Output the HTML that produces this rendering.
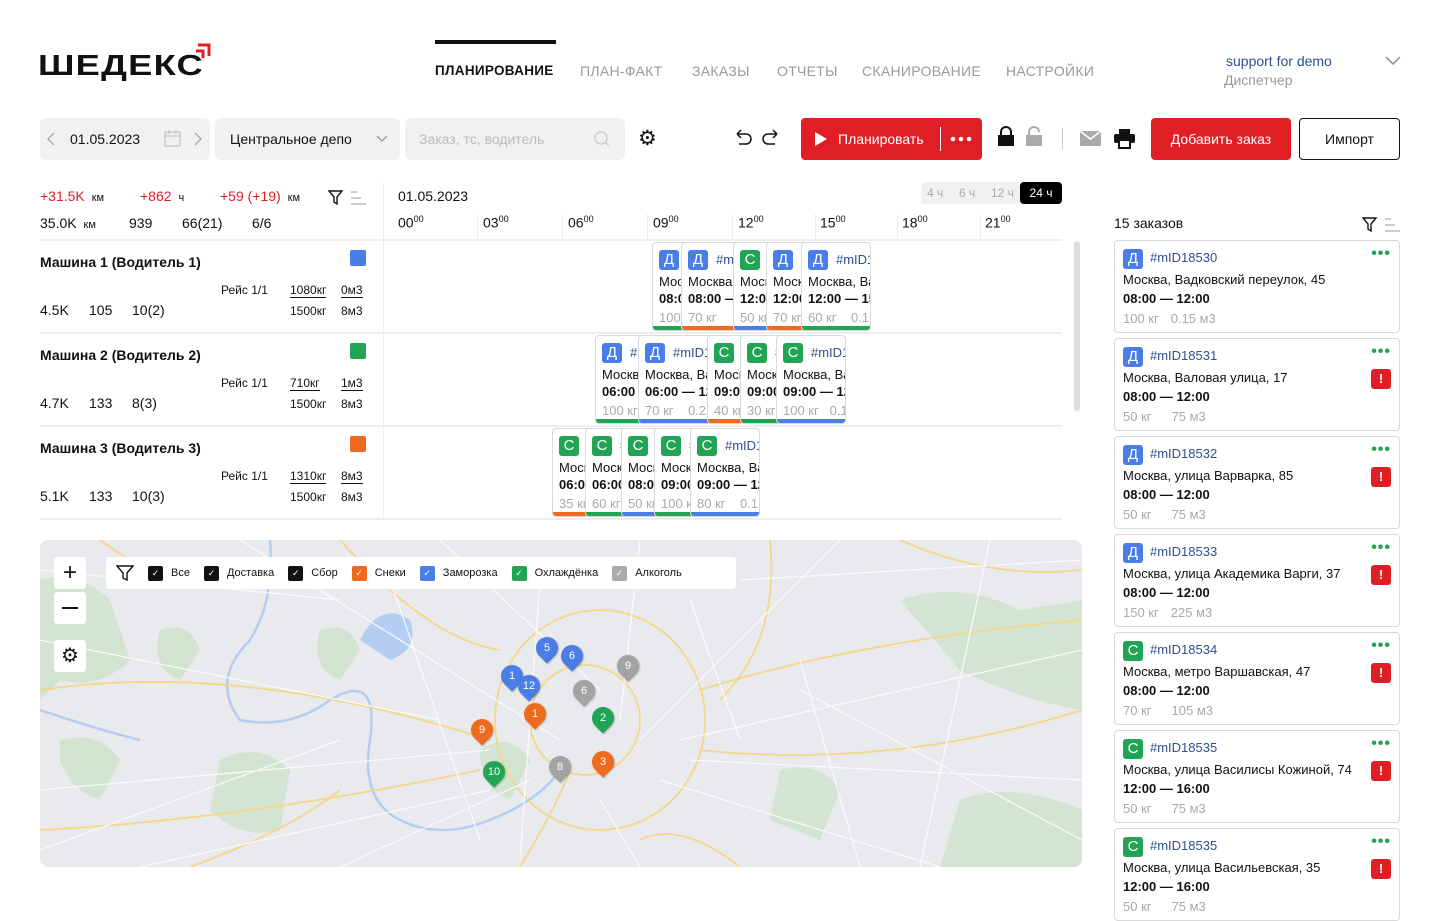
<!DOCTYPE html>
<html><head><meta charset="utf-8"><style>
*{box-sizing:border-box;margin:0;padding:0}
body{width:1440px;height:886px;overflow:hidden;background:#fff;font-family:"Liberation Sans",sans-serif;color:#111;position:relative}
.a{position:absolute}
.nav{font-size:14px;color:#9a9a9a;letter-spacing:.3px;top:63px}
.box{background:#f1f1f1;border-radius:6px;height:42px;top:118px}
.red{color:#e01e26}
.b{font-weight:bold}
.g{color:#999}
.card{position:absolute;background:#fff;border:1px solid #d9d9d9;border-radius:4px;overflow:hidden;font-size:13px;white-space:nowrap}
.card .bg{position:absolute;left:6px;top:7px;width:20px;height:20px;border-radius:3px;color:#fff;font-size:15px;text-align:center;line-height:20px}
.card .id{position:absolute;left:34px;top:9px;color:#2f4f8f}
.card .l1{position:absolute;left:6px;top:31px}
.card .l2{position:absolute;left:6px;top:48px;font-weight:bold}
.card .l3{position:absolute;left:6px;top:67px;color:#aaa}
.card .bar{position:absolute;left:0;right:0;bottom:0;height:4px}
.D{background:#4a7ee6}.C{background:#22a455}.O{background:#ee6a1f}
.rc{position:absolute;left:1114px;width:286px;height:93px;border:1px solid #d9d9d9;border-radius:4px;font-size:13px}
.rc .bg{position:absolute;left:8px;top:8px;width:20px;height:20px;border-radius:3px;color:#fff;font-size:15px;text-align:center;line-height:20px}
.rc .id{position:absolute;left:35px;top:9px;color:#2f4f8f}
.rc .l1{position:absolute;left:8px;top:31px}
.rc .l2{position:absolute;left:8px;top:50px;font-weight:bold}
.rc .l3{position:absolute;left:8px;top:70px;color:#aaa}
.rc .l3 i{font-style:normal;margin-left:12px}
.rc .dots{position:absolute;right:8px;top:4px;color:#22a455;font-size:16px;letter-spacing:1px;font-weight:bold}
.rc .ex{position:absolute;right:8px;top:30px;width:20px;height:20px;background:#e01e26;border-radius:3px;color:#fff;font-weight:bold;text-align:center;line-height:20px;font-size:13px}
.hr{font-size:14px;top:214px}
.hr sup{font-size:9px}
.vl{position:absolute;width:1px;background:#eee}
.pin{position:absolute;width:22px;height:22px;border-radius:50% 50% 50% 0;transform:rotate(-45deg);box-shadow:0 1px 2px rgba(0,0,0,.3)}
.pin span{display:block;transform:rotate(45deg);color:#fff;font-size:11px;text-align:center;line-height:22px}
.cb{display:inline-block;width:15px;height:15px;border-radius:2px;vertical-align:middle;margin-right:8px;color:#fff;font-size:9px;text-align:center;line-height:15px}
.lg{font-size:11px;margin-right:14px;vertical-align:middle}
</style></head><body>

<div class="a" style="left:38px;top:50px;font-size:29px;font-weight:900;letter-spacing:1px;transform:scaleX(1.25);transform-origin:left">ШЕДЕКС</div>
<svg class="a" style="left:194px;top:42px" width="18" height="18"><path d="M4 3h11v11M2 9h7v7" fill="none" stroke="#e01e26" stroke-width="3"/></svg>

<div class="a" style="left:435px;top:40px;width:121px;height:4px;background:#111"></div>
<div class="a nav" style="left:435px;color:#111;font-weight:bold;font-size:13.5px">ПЛАНИРОВАНИЕ</div>
<div class="a nav" style="left:580px">ПЛАН-ФАКТ</div>
<div class="a nav" style="left:692px">ЗАКАЗЫ</div>
<div class="a nav" style="left:777px">ОТЧЕТЫ</div>
<div class="a nav" style="left:862px">СКАНИРОВАНИЕ</div>
<div class="a nav" style="left:1006px">НАСТРОЙКИ</div>
<div class="a" style="left:1226px;top:53px;font-size:14px;color:#2f4f8f">support for demo</div>
<div class="a" style="left:1224px;top:72px;font-size:14px;color:#999">Диспетчер</div>
<svg class="a" style="left:1385px;top:56px" width="16" height="10"><path d="M1 1l7 7 7-7" fill="none" stroke="#888" stroke-width="1.5"/></svg>

<div class="a box" style="left:40px;width:170px"></div>
<svg class="a" style="left:47px;top:132px" width="8" height="14"><path d="M7 1L1 7l6 6" fill="none" stroke="#aaa" stroke-width="1.4"/></svg>
<div class="a" style="left:70px;top:131px;font-size:14px">01.05.2023</div>
<svg class="a" style="left:164px;top:130px" width="18" height="17"><rect x="1" y="2" width="15" height="14" fill="none" stroke="#bbb"/><path d="M1 6h15M5 0v4M12 0v4" stroke="#bbb"/></svg>
<svg class="a" style="left:194px;top:132px" width="8" height="14"><path d="M1 1l6 6-6 6" fill="none" stroke="#aaa" stroke-width="1.4"/></svg>
<div class="a box" style="left:215px;width:185px"></div>
<div class="a" style="left:230px;top:131px;font-size:14px">Центральное депо</div>
<svg class="a" style="left:376px;top:135px" width="12" height="8"><path d="M1 1l5 5 5-5" fill="none" stroke="#999" stroke-width="1.3"/></svg>
<div class="a box" style="left:405px;width:220px"></div>
<div class="a" style="left:419px;top:131px;font-size:14px;color:#bbb">Заказ, тс, водитель</div>
<svg class="a" style="left:593px;top:130px" width="18" height="18"><circle cx="8" cy="8" r="6" fill="none" stroke="#ccc" stroke-width="1.3"/><path d="M12.5 12.5l4 4" stroke="#ccc" stroke-width="1.3"/></svg>
<div class="a" style="left:638px;top:126px;font-size:21px">⚙</div>
<svg class="a" style="left:733px;top:129px" width="48" height="18"><path d="M4 5h9a5 5 0 010 10H6M4 5l4-4M4 5l4 4M44 5h-9a5 5 0 000 10h7M44 5l-4-4M44 5l-4 4" fill="none" stroke="#111" stroke-width="1.5"/></svg>
<div class="a" style="left:801px;top:118px;width:181px;height:42px;background:#e01e26;border-radius:4px"></div>
<svg class="a" style="left:814px;top:131px" width="14" height="16"><path d="M1 1l12 7-12 7z" fill="#fff"/></svg>
<div class="a" style="left:838px;top:131px;font-size:14px;color:#fff">Планировать</div>
<div class="a" style="left:940px;top:127px;width:1px;height:24px;background:#fff"></div>
<svg class="a" style="left:950px;top:136px" width="22" height="6"><circle cx="3" cy="3" r="2.3" fill="#fff"/><circle cx="11" cy="3" r="2.3" fill="#fff"/><circle cx="19" cy="3" r="2.3" fill="#fff"/></svg>
<svg class="a" style="left:997px;top:126px" width="46" height="22"><path d="M4 9V6a5 5 0 0110 0v3" fill="none" stroke="#111" stroke-width="2"/><rect x="1" y="9" width="16" height="11" fill="#111"/><path d="M32 9V6a5 5 0 0110 0" fill="none" stroke="#aaa" stroke-width="2"/><rect x="29" y="9" width="16" height="11" fill="#aaa"/></svg>
<div class="a" style="left:1062px;top:128px;width:1px;height:22px;background:#ccc"></div>
<svg class="a" style="left:1080px;top:131px" width="21" height="15"><rect width="21" height="15" fill="#aaa"/><path d="M0 0l10.5 8L21 0" fill="none" stroke="#fff" stroke-width="1.5"/></svg>
<svg class="a" style="left:1114px;top:129px" width="21" height="20"><rect x="5" y="0" width="11" height="5" fill="#111"/><rect x="0" y="5" width="21" height="9" rx="2" fill="#111"/><rect x="5" y="11" width="11" height="8" fill="#fff" stroke="#111" stroke-width="2"/></svg>
<div class="a" style="left:1151px;top:118px;width:140px;height:42px;background:#e01e26;border-radius:4px;color:#fff;font-size:14px;text-align:center;line-height:42px">Добавить заказ</div>
<div class="a" style="left:1299px;top:118px;width:101px;height:42px;border:1.5px solid #111;border-radius:4px;font-size:14px;text-align:center;line-height:40px">Импорт</div>

<div class="a red" style="left:40px;top:188px;font-size:14px">+31.5K <span style="color:#111;font-size:11px">&nbsp;км</span></div>
<div class="a red" style="left:140px;top:188px;font-size:14px">+862 <span style="color:#111;font-size:11px">&nbsp;ч</span></div>
<div class="a red" style="left:220px;top:188px;font-size:14px">+59 (+19) <span style="color:#111;font-size:11px">&nbsp;км</span></div>
<svg class="a" style="left:328px;top:190px" width="40" height="16"><path d="M1 1h13l-5 6v7l-3-2V7z" fill="none" stroke="#111" stroke-width="1.4"/><path d="M23 2h6M23 8h10M23 14h15" stroke="#bbb" stroke-width="1.4"/></svg>
<div class="a" style="left:40px;top:215px;font-size:14px">35.0K <span style="font-size:11px">&nbsp;км</span></div>
<div class="a" style="left:129px;top:215px;font-size:14px">939</div>
<div class="a" style="left:182px;top:215px;font-size:14px">66(21)</div>
<div class="a" style="left:252px;top:215px;font-size:14px">6/6</div>

<div class="a" style="left:383px;top:183px;width:1px;height:336px;background:#eee"></div>
<div class="a" style="left:398px;top:188px;font-size:14px">01.05.2023</div>
<div class="a" style="left:921px;top:182px;width:141px;height:22px;background:#f1f1f1;border-radius:4px"></div>
<div class="a" style="left:927px;top:186px;font-size:12px;color:#aaa">4 ч</div>
<div class="a" style="left:959px;top:186px;font-size:12px;color:#aaa">6 ч</div>
<div class="a" style="left:991px;top:186px;font-size:12px;color:#aaa">12 ч</div>
<div class="a" style="left:1020px;top:182px;width:42px;height:22px;background:#000;border-radius:4px;color:#fff;font-size:12px;text-align:center;line-height:22px">24 ч</div>
<div class="a hr" style="left:398px">00<sup>00</sup></div>
<div class="a hr" style="left:483px">03<sup>00</sup></div>
<div class="a hr" style="left:568px">06<sup>00</sup></div>
<div class="a hr" style="left:653px">09<sup>00</sup></div>
<div class="a hr" style="left:738px">12<sup>00</sup></div>
<div class="a hr" style="left:820px">15<sup>00</sup></div>
<div class="a hr" style="left:902px">18<sup>00</sup></div>
<div class="a hr" style="left:985px">21<sup>00</sup></div>
<div class="vl" style="left:477px;top:214px;height:26px"></div>
<div class="vl" style="left:562px;top:214px;height:26px"></div>
<div class="vl" style="left:647px;top:214px;height:26px"></div>
<div class="vl" style="left:732px;top:214px;height:26px"></div>
<div class="vl" style="left:815px;top:214px;height:26px"></div>
<div class="vl" style="left:897px;top:214px;height:26px"></div>
<div class="vl" style="left:980px;top:214px;height:26px"></div>
<div class="a" style="left:40px;top:239px;width:1022px;height:2px;background:#eee"></div>
<div class="a" style="left:40px;top:332px;width:1022px;height:2px;background:#eee"></div>
<div class="a" style="left:40px;top:425px;width:1022px;height:2px;background:#eee"></div>
<div class="a" style="left:40px;top:518px;width:1022px;height:2px;background:#eee"></div>
<div class="a" style="left:1074px;top:241px;width:6px;height:170px;background:#ddd;border-radius:3px"></div>

<div class="a b" style="left:40px;top:254px;font-size:14px">Машина 1 (Водитель 1)</div>
<div class="a D" style="left:350px;top:250px;width:16px;height:16px;border-radius:2px"></div>
<div class="a" style="left:221px;top:283px;font-size:12px">Рейс 1/1</div>
<div class="a" style="left:290px;top:283px;font-size:12px;border-bottom:1px solid #111">1080кг</div>
<div class="a" style="left:341px;top:283px;font-size:12px;border-bottom:1px solid #111">0м3</div>
<div class="a" style="left:290px;top:304px;font-size:12px">1500кг</div>
<div class="a" style="left:341px;top:304px;font-size:12px">8м3</div>
<div class="a" style="left:40px;top:302px;font-size:14px">4.5K</div><div class="a" style="left:89px;top:302px;font-size:14px">105</div><div class="a" style="left:132px;top:302px;font-size:14px">10(2)</div>

<div class="a b" style="left:40px;top:347px;font-size:14px">Машина 2 (Водитель 2)</div>
<div class="a C" style="left:350px;top:343px;width:16px;height:16px;border-radius:2px"></div>
<div class="a" style="left:221px;top:376px;font-size:12px">Рейс 1/1</div>
<div class="a" style="left:290px;top:376px;font-size:12px;border-bottom:1px solid #111">710кг</div>
<div class="a" style="left:341px;top:376px;font-size:12px;border-bottom:1px solid #111">1м3</div>
<div class="a" style="left:290px;top:397px;font-size:12px">1500кг</div>
<div class="a" style="left:341px;top:397px;font-size:12px">8м3</div>
<div class="a" style="left:40px;top:395px;font-size:14px">4.7K</div><div class="a" style="left:89px;top:395px;font-size:14px">133</div><div class="a" style="left:132px;top:395px;font-size:14px">8(3)</div>

<div class="a b" style="left:40px;top:440px;font-size:14px">Машина 3 (Водитель 3)</div>
<div class="a O" style="left:350px;top:436px;width:16px;height:16px;border-radius:2px"></div>
<div class="a" style="left:221px;top:469px;font-size:12px">Рейс 1/1</div>
<div class="a" style="left:290px;top:469px;font-size:12px;border-bottom:1px solid #111">1310кг</div>
<div class="a" style="left:341px;top:469px;font-size:12px;border-bottom:1px solid #111">8м3</div>
<div class="a" style="left:290px;top:490px;font-size:12px">1500кг</div>
<div class="a" style="left:341px;top:490px;font-size:12px">8м3</div>
<div class="a" style="left:40px;top:488px;font-size:14px">5.1K</div><div class="a" style="left:89px;top:488px;font-size:14px">133</div><div class="a" style="left:132px;top:488px;font-size:14px">10(3)</div>

<div class="card" style="left:652px;top:242px;width:40px;height:89px"><div class="bg D">Д</div><div class="id">#m</div><div class="l1">Москва</div><div class="l2">08:00</div><div class="l3">100 кг</div><div class="bar C"></div></div>
<div class="card" style="left:681px;top:242px;width:60px;height:89px"><div class="bg D">Д</div><div class="id">#mID1</div><div class="l1">Москва</div><div class="l2">08:00 —</div><div class="l3">70 кг</div><div class="bar O"></div></div>
<div class="card" style="left:733px;top:242px;width:40px;height:89px"><div class="bg C">С</div><div class="id">#m</div><div class="l1">Москва</div><div class="l2">12:00</div><div class="l3">50 кг</div><div class="bar D"></div></div>
<div class="card" style="left:766px;top:242px;width:40px;height:89px"><div class="bg D">Д</div><div class="id">#m</div><div class="l1">Москва</div><div class="l2">12:00</div><div class="l3">70 кг</div><div class="bar O"></div></div>
<div class="card" style="left:801px;top:242px;width:70px;height:89px"><div class="bg D">Д</div><div class="id">#mID1</div><div class="l1">Москва, Ва</div><div class="l2">12:00 — 15</div><div class="l3">60 кг &nbsp;&nbsp; 0.1</div><div class="bar C"></div></div>
<div class="card" style="left:595px;top:335px;width:50px;height:89px"><div class="bg D">Д</div><div class="id">#m</div><div class="l1">Москва</div><div class="l2">06:00</div><div class="l3">100 кг</div><div class="bar C"></div></div>
<div class="card" style="left:638px;top:335px;width:76px;height:89px"><div class="bg D">Д</div><div class="id">#mID1</div><div class="l1">Москва, Ва</div><div class="l2">06:00 — 12</div><div class="l3">70 кг &nbsp;&nbsp; 0.2</div><div class="bar D"></div></div>
<div class="card" style="left:707px;top:335px;width:40px;height:89px"><div class="bg C">С</div><div class="id">#m</div><div class="l1">Москва</div><div class="l2">09:00</div><div class="l3">40 кг</div><div class="bar O"></div></div>
<div class="card" style="left:740px;top:335px;width:42px;height:89px"><div class="bg C">С</div><div class="id">#m</div><div class="l1">Москва</div><div class="l2">09:00</div><div class="l3">30 кг</div><div class="bar C"></div></div>
<div class="card" style="left:776px;top:335px;width:70px;height:89px"><div class="bg C">С</div><div class="id">#mID1</div><div class="l1">Москва, Ва</div><div class="l2">09:00 — 12</div><div class="l3">100 кг &nbsp; 0.1</div><div class="bar D"></div></div>
<div class="card" style="left:552px;top:428px;width:40px;height:89px"><div class="bg C">С</div><div class="id">#m</div><div class="l1">Москва</div><div class="l2">06:00</div><div class="l3">35 кг</div><div class="bar O"></div></div>
<div class="card" style="left:585px;top:428px;width:42px;height:89px"><div class="bg C">С</div><div class="id">#m</div><div class="l1">Москва</div><div class="l2">06:00</div><div class="l3">60 кг</div><div class="bar C"></div></div>
<div class="card" style="left:621px;top:428px;width:40px;height:89px"><div class="bg C">С</div><div class="id">#m</div><div class="l1">Москва</div><div class="l2">08:00</div><div class="l3">50 кг</div><div class="bar D"></div></div>
<div class="card" style="left:654px;top:428px;width:42px;height:89px"><div class="bg C">С</div><div class="id">#m</div><div class="l1">Москва</div><div class="l2">09:00</div><div class="l3">100 кг</div><div class="bar C"></div></div>
<div class="card" style="left:690px;top:428px;width:70px;height:89px"><div class="bg C">С</div><div class="id">#mID1</div><div class="l1">Москва, Ва</div><div class="l2">09:00 — 12</div><div class="l3">80 кг &nbsp;&nbsp; 0.1</div><div class="bar D"></div></div>

<div class="a" style="left:40px;top:540px;width:1042px;height:327px;background:#e9eaed;border-radius:8px;overflow:hidden">
<svg width="1042" height="327" style="position:absolute;left:0;top:0">
<g fill="#cfe3cc" opacity=".85">
<path d="M0 40 Q40 30 70 60 L90 120 Q60 150 20 140 L0 160Z"/>
<path d="M20 200 Q60 190 80 220 L60 260 Q30 250 20 220Z"/>
<path d="M180 220 Q220 200 250 230 L240 290 Q200 300 170 270Z"/>
<path d="M280 90 Q310 80 320 110 L300 140 Q270 130 280 90Z"/>
<path d="M440 210 Q470 190 490 220 L470 260 Q440 250 440 210Z"/>
<path d="M860 60 Q920 40 980 70 L1042 60 L1042 170 Q980 160 920 130 Z"/>
<path d="M920 260 Q970 240 1042 270 L1042 327 L900 327Z"/>
<path d="M740 230 Q780 220 800 250 L780 300 L730 280Z"/>
<path d="M120 90 Q150 80 160 110 L140 140 Q110 130 120 90Z"/>
</g>
<g fill="none" stroke="#b4cdf3" stroke-width="2.5">
<path d="M230 0 Q235 60 210 100 Q170 140 200 180 Q250 190 290 160 Q340 130 330 200 Q320 260 360 280 Q400 300 450 280 Q500 260 520 230"/>
<path d="M0 170 Q60 190 100 200"/>
</g>
<path d="M320 100 Q340 60 370 80 Q380 110 350 120Z" fill="#b4cdf3"/>
<g fill="none" stroke="#f5d789" stroke-width="1.8">
<ellipse cx="560" cy="180" rx="105" ry="110"/>
<ellipse cx="545" cy="180" rx="55" ry="55"/>
<path d="M0 150 Q200 120 450 200 M0 290 Q200 280 440 230 M660 150 Q820 100 1042 80 M660 210 Q850 230 1042 170 M730 0 Q740 100 680 160 M300 0 Q390 100 460 110 M480 327 Q520 260 530 230 M600 300 Q640 280 700 327 M60 0 Q100 30 140 40 M1042 30 Q950 40 860 0 M150 327 Q250 290 300 250"/>
</g>
<g fill="none" stroke="#fafafa" stroke-width="1.2">
<path d="M0 100 L400 180 M200 0 L520 200 M400 0 L560 150 M600 0 L580 180 M800 0 L600 200 M1042 110 L640 200 M1042 240 L650 220 M900 327 L620 240 M600 327 L560 260 M300 327 L490 240 M0 250 L450 210 M100 327 L450 250 M0 30 L300 60 M700 40 L1042 20 M650 60 L700 200 M500 40 L480 320 M350 40 L440 300 M760 150 L1042 300 M0 310 L300 200 M820 327 L760 120 M950 0 L880 327"/>
</g>
</svg>
</div>
<div class="a" style="left:54px;top:557px;width:32px;height:32px;background:#fff;border-radius:3px;font-size:24px;text-align:center;line-height:31px">+</div>
<div class="a" style="left:54px;top:592px;width:32px;height:32px;background:#fff;border-radius:3px"><div style="margin:15px 8px;width:16px;height:2px;background:#111"></div></div>
<div class="a" style="left:54px;top:640px;width:32px;height:32px;background:#fff;border-radius:3px;font-size:20px;text-align:center;line-height:32px">⚙</div>
<div class="a" style="left:106px;top:557px;width:630px;height:32px;background:#fff;border-radius:3px;padding:0 0 0 10px;white-space:nowrap;line-height:32px">
<svg width="18" height="16" style="vertical-align:middle;margin-right:14px"><path d="M1 1h16l-6 7v7l-4-2V8z" fill="none" stroke="#111" stroke-width="1.4"/></svg><span class="lg"><span class="cb" style="background:#111">✓</span>Все</span><span class="lg"><span class="cb" style="background:#111">✓</span>Доставка</span><span class="lg"><span class="cb" style="background:#111">✓</span>Сбор</span><span class="lg"><span class="cb O">✓</span>Снеки</span><span class="lg"><span class="cb D">✓</span>Заморозка</span><span class="lg"><span class="cb C">✓</span>Охлаждёнка</span><span class="lg"><span class="cb" style="background:#aaa">✓</span>Алкоголь</span>
</div>
<div class="pin D" style="left:536px;top:637px"><span>5</span></div>
<div class="pin D" style="left:561px;top:645px"><span>6</span></div>
<div class="pin D" style="left:501px;top:665px"><span>1</span></div>
<div class="pin D" style="left:518px;top:675px"><span>12</span></div>
<div class="pin" style="left:573px;top:680px;background:#a3a3a3"><span>6</span></div>
<div class="pin" style="left:617px;top:655px;background:#a3a3a3"><span>9</span></div>
<div class="pin O" style="left:524px;top:703px"><span>1</span></div>
<div class="pin C" style="left:592px;top:707px"><span>2</span></div>
<div class="pin O" style="left:471px;top:719px"><span>9</span></div>
<div class="pin O" style="left:592px;top:751px"><span>3</span></div>
<div class="pin" style="left:549px;top:756px;background:#a3a3a3"><span>8</span></div>
<div class="pin C" style="left:483px;top:761px"><span>10</span></div>

<div class="a" style="left:1114px;top:215px;font-size:14px">15 заказов</div>
<svg class="a" style="left:1362px;top:217px" width="40" height="16"><path d="M1 1h13l-5 6v7l-3-2V7z" fill="none" stroke="#111" stroke-width="1.4"/><path d="M23 2h6M23 8h10M23 14h15" stroke="#bbb" stroke-width="1.4"/></svg>

<div class="rc" style="top:240px"><div class="bg D">Д</div><div class="id">#mID18530</div><div class="dots">•••</div><div class="l1">Москва, Вадковский переулок, 45</div><div class="l2">08:00 — 12:00</div><div class="l3">100 кг<i>0.15 м3</i></div></div>
<div class="rc" style="top:338px"><div class="bg D">Д</div><div class="id">#mID18531</div><div class="dots">•••</div><div class="ex">!</div><div class="l1">Москва, Валовая улица, 17</div><div class="l2">08:00 — 12:00</div><div class="l3">50 кг<i style="margin-left:20px">75 м3</i></div></div>
<div class="rc" style="top:436px"><div class="bg D">Д</div><div class="id">#mID18532</div><div class="dots">•••</div><div class="ex">!</div><div class="l1">Москва, улица Варварка, 85</div><div class="l2">08:00 — 12:00</div><div class="l3">50 кг<i style="margin-left:20px">75 м3</i></div></div>
<div class="rc" style="top:534px"><div class="bg D">Д</div><div class="id">#mID18533</div><div class="dots">•••</div><div class="ex">!</div><div class="l1">Москва, улица Академика Варги, 37</div><div class="l2">08:00 — 12:00</div><div class="l3">150 кг<i>225 м3</i></div></div>
<div class="rc" style="top:632px"><div class="bg C">С</div><div class="id">#mID18534</div><div class="dots">•••</div><div class="ex">!</div><div class="l1">Москва, метро Варшавская, 47</div><div class="l2">08:00 — 12:00</div><div class="l3">70 кг<i style="margin-left:20px">105 м3</i></div></div>
<div class="rc" style="top:730px"><div class="bg C">С</div><div class="id">#mID18535</div><div class="dots">•••</div><div class="ex">!</div><div class="l1">Москва, улица Василисы Кожиной, 74</div><div class="l2">12:00 — 16:00</div><div class="l3">50 кг<i style="margin-left:20px">75 м3</i></div></div>
<div class="rc" style="top:828px"><div class="bg C">С</div><div class="id">#mID18535</div><div class="dots">•••</div><div class="ex">!</div><div class="l1">Москва, улица Васильевская, 35</div><div class="l2">12:00 — 16:00</div><div class="l3">50 кг<i style="margin-left:20px">75 м3</i></div></div>
</body></html>
